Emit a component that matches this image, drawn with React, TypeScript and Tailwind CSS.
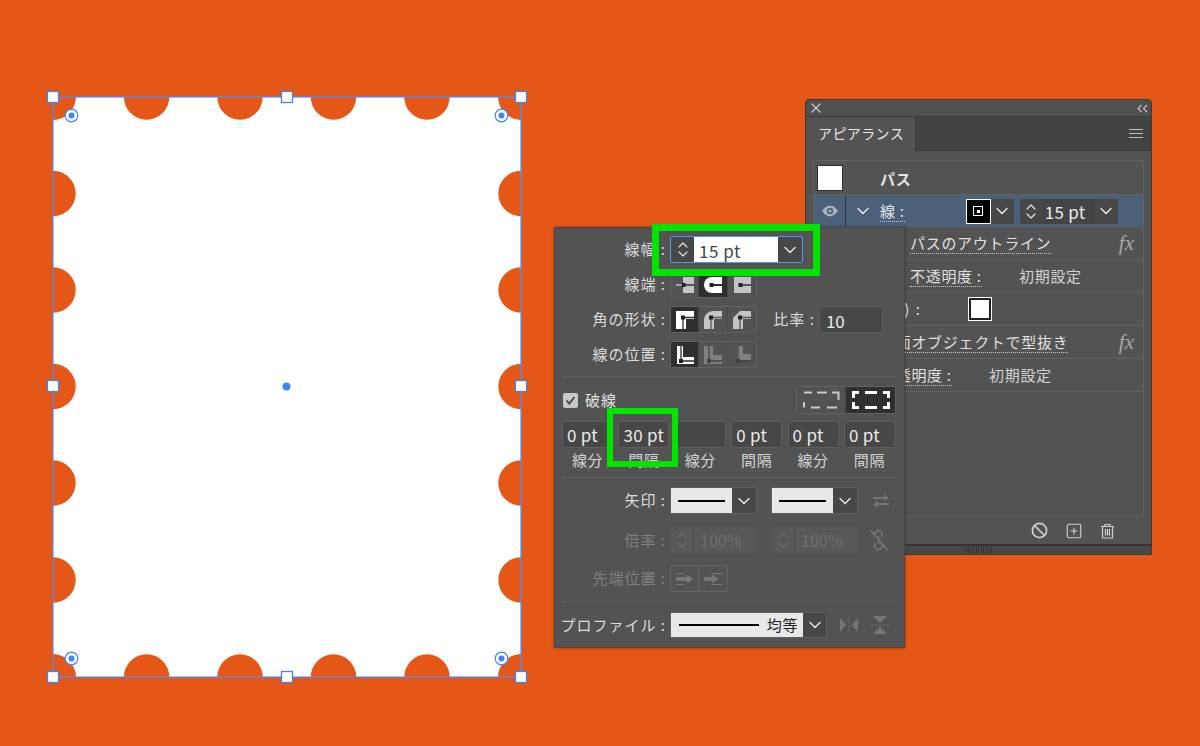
import { Ban, ChevronDown, ChevronUp, SquarePlus, X } from "lucide-react";

const jp = { fontFamily: '"Noto Sans CJK JP", sans-serif' };

const Chev = ({ up = false, dim = false }: { up?: boolean; dim?: boolean }) =>
  up ? (
    <ChevronUp size={20} strokeWidth={1.7} className={dim ? "text-[#6f6f6f]" : "text-[#e6e6e6]"} />
  ) : (
    <ChevronDown size={20} strokeWidth={1.7} className={dim ? "text-[#6f6f6f]" : "text-[#e6e6e6]"} />
  );

const Stepper = ({ dim = false, w = "w-[23px]" }: { dim?: boolean; w?: string }) => (
  <div className={`${w} h-full flex flex-col items-center justify-center -space-y-[7px]`}>
    <Chev up dim={dim} />
    <Chev dim={dim} />
  </div>
);

const Label = ({ children, w = "w-[111px]", dim = false }: { children: string; w?: string; dim?: boolean }) => (
  <div className={`${w} shrink-0 text-right text-[15px] tracking-[1px] whitespace-nowrap ${dim ? "text-[#808080]" : "text-[#dcdcdc]"}`}>
    {children}
  </div>
);

const Seg = ({ active = false, disabled = false, last = false, children }: { active?: boolean; disabled?: boolean; last?: boolean; children: React.ReactNode }) => (
  <div className={`w-[28.3px] h-full flex items-center justify-center ${active ? "bg-[#2f2f2f]" : ""} ${last ? "" : "border-r border-[#484848]"} ${disabled ? "opacity-40" : ""}`}>
    {children}
  </div>
);

const CapIcon = ({ kind, fill }: { kind: number; fill: string }) => (
  <svg width="22" height="22" viewBox="0 0 22 22">
    {kind === 0 && <path d="M9 3H20V19H9Z" fill={fill} />}
    {kind === 1 && <path d="M10 3H20V19H10A8 8 0 0 1 10 3Z" fill={fill} />}
    {kind === 2 && <path d="M3 3H20V19H3Z" fill={fill} />}
    <path d="M9 10H20V12H9Z" fill={kind === 1 ? "#2f2f2f" : "#555"} />
    <rect x="7.5" y="9" width="4" height="4" fill="#222" />
    {kind === 0 && <path d="M2 11H8" stroke="#c4c4c4" strokeWidth="1.4" />}
  </svg>
);

const JoinIcon = ({ kind, fill }: { kind: number; fill: string }) => {
  const d = [
    "M2 2H20V10H12V20H2Z",
    "M2 20V11A9 9 0 0 1 11 2H20V10H12V20Z",
    "M2 20V9L9 2H20V10H12V20Z",
  ][kind];
  return (
    <svg width="22" height="22" viewBox="0 0 22 22">
      <path d={d} fill={fill} />
      <path d="M9 20V8.500H20" stroke={kind === 0 ? "#2f2f2f" : "#555"} strokeWidth="1.300" fill="none" />
      <rect x="7" y="6.500" width="4" height="4" fill="#222" />
    </svg>
  );
};

const AlignIcon = ({ kind, fill }: { kind: number; fill: string }) => (
  <svg width="22" height="22" viewBox="0 0 22 22">
    {kind === 0 && <path d="M3 2H9V13H20V20H3Z" fill={fill} />}
    {kind === 1 && <path d="M2 2H11V11H20V20H2Z" fill={fill} />}
    {kind === 2 && <path d="M6 2H12V10H20V16H6Z" fill={fill} />}
    <path d="M7 2V17H20" stroke="#2f2f2f" strokeWidth="1.300" fill="none" />
    <rect x="5" y="15" width="4" height="4" fill="#222" />
  </svg>
);

const DashIcon = ({ strong }: { strong?: boolean }) => (
  <svg width="38" height="18" viewBox="0 0 38 18">
    {strong ? (
      <path d="M1.500 7V1.500H7M1.500 11V16.500H7M36.500 7V1.500H31M36.500 11V16.500H31M13 1.500H25M13 16.500H25" stroke="#fff" strokeWidth="3" fill="none" />
    ) : (
      <path d="M2 1.500H10M15 1.500H25M30 1.500H36.500V9M2 11V16.500M9 16.500H18M25 16.500H35" stroke="#c8c8c8" strokeWidth="2" fill="none" />
    )}
  </svg>
);

const DashField = ({ value, label }: { value: string; label: string }) => (
  <div className="w-[51px] flex flex-col items-center">
    <div className="w-full h-[27px] bg-[#474747] border border-[#5e5e5e] rounded-[2px] flex items-center pl-[4px] text-[17px] text-[#ececec] tracking-[0.3px] whitespace-nowrap">
      {value}
    </div>
    <div className="mt-[1px] text-[15px] leading-[22px] tracking-[0.6px] text-[#d4d4d4]">{label}</div>
  </div>
);

const Divider = ({ className }: { className: string }) => <div className={`h-[1px] mx-[7px] bg-[#606060] ${className}`} />;

const ArrowSelect = ({ className = "" }: { className?: string }) => (
  <div className={`w-[87px] h-full flex border border-[#5f5f5f] rounded-[2px] ${className}`}>
    <div className="w-[61px] bg-[#e8e8e8] flex items-center justify-center">
      <div className="w-[47px] h-[2px] bg-black" />
    </div>
    <div className="flex-1 bg-[#474747] flex items-center justify-center">
      <Chev />
    </div>
  </div>
);

const ScaleField = ({ className = "" }: { className?: string }) => (
  <div className={`w-[87px] h-full flex bg-[#585858] rounded-[2px] ${className}`}>
    <div className="border-r border-[#4d4d4d]">
      <Stepper dim />
    </div>
    <div className="pl-[6px] text-[16px] leading-[27px] text-[#6f6f6f]">100%</div>
  </div>
);

const LinkRow = ({ label, text, value, valueClass = "left-[175px]", className = "" }: { label?: string; text?: string; value?: string; valueClass?: string; className?: string }) => (
  <div className={`relative h-[33px] border-b border-[#626262] flex items-center pt-[1px] text-[15px] tracking-[0.7px] text-[#e0e0e0] ${className}`}>
    {label && <span className="border-b border-dotted border-[#c8c8c8] leading-[20px] whitespace-nowrap">{label}</span>}
    {value && <span className={`absolute text-[#d2d2d2] ${valueClass}`}>{value}</span>}
    {text && (
      <span className="absolute right-[9px] text-[#a8a8a8] text-[21px] italic tracking-normal" style={{ fontFamily: '"Liberation Serif", serif' }}>
        {text}
      </span>
    )}
  </div>
);

const Artwork = () => {
  const xs = [53, 146.6, 240, 333.5, 427, 521];
  const ys = [97, 193.5, 290, 386.5, 483, 580, 677];
  return (
    <svg className="absolute left-0 top-0" width="600" height="746">
      <rect x="53" y="97" width="468" height="580" fill="#fff" />
      <g fill="#e55717">
        {xs.map((x) => (
          <g key={x}>
            <circle cx={x} cy={97} r="22.7" />
            <circle cx={x} cy={677} r="22.7" />
          </g>
        ))}
        {ys.map((y) => (
          <g key={y}>
            <circle cx={53} cy={y} r="22.7" />
            <circle cx={521} cy={y} r="22.7" />
          </g>
        ))}
      </g>
      <rect x="53" y="97" width="468" height="580" fill="none" stroke="#4d8dff" strokeWidth="1.2" />
      {[
        [53, 97],
        [287, 97],
        [521, 97],
        [53, 386],
        [521, 386],
        [53, 677],
        [287, 677],
        [521, 677],
      ].map(([x, y]) => (
        <rect key={`${x}-${y}`} x={x - 5.5} y={y - 5.5} width="11" height="11" fill="#fff" stroke="#3f86f5" strokeWidth="1.3" />
      ))}
      {[
        [71.5, 115.5],
        [501.5, 115.5],
        [71.5, 658.5],
        [501.5, 658.5],
      ].map(([x, y]) => (
        <g key={`${x}-${y}`}>
          <circle cx={x} cy={y} r="6.3" fill="#fff" stroke="#3f86f5" strokeWidth="1.2" />
          <circle cx={x} cy={y} r="3" fill="#3f86f5" />
        </g>
      ))}
      <circle cx="286.5" cy="386.5" r="4" fill="#3f86f5" />
    </svg>
  );
};

const AppearancePanel = () => (
  <div className="absolute left-[805px] top-[99px] w-[347px] h-[456px] bg-[#535353] border border-[#3a3a3a] rounded-t-[4px] flex flex-col overflow-hidden" style={jp}>
    <div className="h-[17px] bg-[#505050] flex items-center justify-between pl-[2px] pr-[3px] border-b border-[#3c3c3c]">
      <X size={16} strokeWidth={1.8} className="text-[#c8c8c8]" />
      <svg width="11" height="9" viewBox="0 0 11 9" fill="none" stroke="#c8c8c8" strokeWidth="1.1">
        <path d="M4.500 1L1 4.500L4.500 8M10 1L6.500 4.500L10 8" />
      </svg>
    </div>
    <div className="h-[34px] bg-[#434343] flex items-stretch justify-between border-b border-[#3a3a3a]">
      <div className="w-[110px] bg-[#535353] border-r border-[#3a3a3a] -mb-[1px] pl-[12px] text-[14px] leading-[33px] tracking-[0.4px] text-[#e8e8e8]">
        アピアランス
      </div>
      <div className="w-[14px] mr-[8px] flex flex-col justify-center gap-[2.5px]">
        <div className="h-[1.5px] bg-[#bdbdbd]" />
        <div className="h-[1.5px] bg-[#bdbdbd]" />
        <div className="h-[1.5px] bg-[#bdbdbd]" />
      </div>
    </div>
    <div className="mx-[7px] mt-[9px] h-[357px] border border-[#626262] rounded-[2px] flex flex-col">
      <div className="h-[34px] flex items-center border-b border-[#626262] pl-[3px]">
        <div className="w-[26px] h-[26px] bg-white border border-[#2e2e2e]" />
        <div className="ml-[37px] pt-[3px] text-[15px] font-bold tracking-[0.7px] text-[#e4e4e4]">パス</div>
      </div>
      <div className="h-[32px] bg-[#4b6079] flex items-center">
        <div className="w-[32px] h-full flex items-center justify-center border-r border-[#2f3a47] shrink-0">
          <svg width="18" height="12" viewBox="0 0 18 12">
            <path d="M1 6C4 2 6.500 .8 9 .8S14 2 17 6C14 10 11.500 11.200 9 11.200S4 10 1 6Z" fill="#a9b4c0" />
            <circle cx="9" cy="6" r="3.2" fill="#4b6079" />
            <circle cx="9" cy="6" r="1.500" fill="#a9b4c0" />
          </svg>
        </div>
        <div className="w-[34px] flex justify-center">
          <Chev />
        </div>
        <div className="text-[15px] mt-[1px] tracking-[0.7px] text-[#e8e8e8] border-b border-dotted border-[#c8c8c8] leading-[20px] whitespace-nowrap">線 :</div>
        <div className="ml-[61px] w-[48px] h-[25px] flex bg-[#474747] rounded-[2px]">
          <div className="w-[25px] h-[25px] bg-black border border-white flex items-center justify-center">
            <div className="w-[10px] h-[10px] border-[1.5px] border-white bg-black flex items-center justify-center">
              <div className="w-[3px] h-[3px] bg-white" />
            </div>
          </div>
          <div className="flex-1 flex items-center justify-center">
            <Chev />
          </div>
        </div>
        <div className="ml-[6px] w-[98px] h-[25px] flex bg-[#474747] rounded-[2px]">
          <Stepper />
          <div className="w-[51px] bg-[#444] pl-[2px] text-[17px] leading-[26px] tracking-[0.3px] text-[#ececec] whitespace-nowrap">15 pt</div>
          <div className="flex-1 flex items-center justify-center">
            <Chev />
          </div>
        </div>
      </div>
      <LinkRow label="パスのアウトライン" text="fx" className="pl-[96px]" />
      <LinkRow label="不透明度 :" value="初期設定" valueClass="left-[205px]" className="pl-[96px]" />
      <div className="relative h-[33px] border-b border-[#626262] flex items-center text-[15px] text-[#e0e0e0] pl-[38px]">
        <span className="tracking-[1.5px] whitespace-nowrap">塗り(O) :</span>
        <div className="absolute left-[154px] top-[4px] w-[24px] h-[24px] border-[1.5px] border-white bg-[#222] p-[2px]">
          <div className="w-full h-full bg-white" />
        </div>
      </div>
      <LinkRow label="前面オブジェクトで型抜き" text="fx" className="pl-[66px]" />
      <LinkRow label="不透明度 :" value="初期設定" className="pl-[66px]" />
    </div>
    <div className="flex-1 flex items-center justify-end gap-[17px] pr-[36px] text-[#d0d0d0]">
      <Ban size={17} strokeWidth={2.4} />
      <SquarePlus size={18} strokeWidth={1.5} />
      <svg width="15" height="16" viewBox="0 0 15 16" fill="none" stroke="#d0d0d0" strokeWidth="1.200">
        <path d="M1 3.500H14M5 3.500V1.500H10V3.500M2.500 3.500V15H12.500V3.500M5.500 6V12.500M7.500 6V12.500M9.500 6V12.500" />
      </svg>
    </div>
    <div className="h-[10px] bg-[#484848] border-t-[2px] border-[#333] flex justify-center items-center">
      <div className="w-[26px] h-[6px] bg-[repeating-linear-gradient(90deg,#333_0,#333_1px,transparent_1px,transparent_2.500px)]" />
    </div>
  </div>
);

const StrokePanel = () => (
  <div className="absolute left-[554px] top-[227px] w-[351px] h-[421px] bg-[#535353] border border-[#474747] shadow-[0_0_3px_rgba(0,0,0,0.35)]" style={jp}>
    <div className="mt-[8px] h-[27px] flex items-center">
      <Label>線幅 :</Label>
      <div className="ml-[4px] w-[133px] h-full flex border border-[#4a9bf0] rounded-[2px] bg-[#474747]">
        <Stepper />
        <div className="w-[84px] bg-white pl-[5px] text-[17px] leading-[27px] tracking-[0.5px] text-[#444]">15 pt</div>
        <div className="flex-1 flex items-center justify-center">
          <Chev />
        </div>
      </div>
    </div>
    <div className="mt-[8px] h-[27px] flex items-center">
      <Label>線端 :</Label>
      <div className="ml-[4px] h-full flex border border-[#616161] rounded-[2px]">
        <Seg><CapIcon kind={0} fill="#c4c4c4" /></Seg>
        <Seg active><CapIcon kind={1} fill="#fff" /></Seg>
        <Seg last><CapIcon kind={2} fill="#c4c4c4" /></Seg>
      </div>
    </div>
    <div className="mt-[8px] h-[27px] flex items-center">
      <Label>角の形状 :</Label>
      <div className="ml-[4px] h-full flex border border-[#616161] rounded-[2px]">
        <Seg active><JoinIcon kind={0} fill="#fff" /></Seg>
        <Seg><JoinIcon kind={1} fill="#c4c4c4" /></Seg>
        <Seg last><JoinIcon kind={2} fill="#c4c4c4" /></Seg>
      </div>
      <Label w="w-[58px]">比率 :</Label>
      <div className="ml-[4px] w-[64px] h-[27px] bg-[#474747] border border-[#5e5e5e] rounded-[2px] pl-[6px] text-[17px] leading-[27px] text-[#ececec]">10</div>
    </div>
    <div className="mt-[8px] h-[27px] flex items-center">
      <Label>線の位置 :</Label>
      <div className="ml-[4px] h-full flex border border-[#616161] rounded-[2px]">
        <Seg active><AlignIcon kind={0} fill="#fff" /></Seg>
        <Seg disabled><AlignIcon kind={1} fill="#c4c4c4" /></Seg>
        <Seg disabled last><AlignIcon kind={2} fill="#c4c4c4" /></Seg>
      </div>
    </div>
    <Divider className="mt-[8px]" />
    <div className="mt-[9px] h-[28px] flex items-center pl-[8px] pr-[8px]">
      <div className="w-[15px] h-[15px] bg-[#c8c8c8] rounded-[2px] flex items-center justify-center">
        <svg width="11" height="11" viewBox="0 0 11 11">
          <path d="M1.500 5.500L4.300 8.500L9.500 2" stroke="#444" strokeWidth="1.800" fill="none" />
        </svg>
      </div>
      <div className="ml-[7px] text-[15px] tracking-[1px] text-[#e4e4e4]">破線</div>
      <div className="ml-auto h-full flex border border-[#616161] rounded-[2px]">
        <div className="w-[49px] flex items-center justify-center border-r border-[#484848]"><DashIcon /></div>
        <div className="w-[49px] bg-[#2f2f2f] flex items-center justify-center"><DashIcon strong /></div>
      </div>
    </div>
    <div className="mt-[7px] pl-[7px] pr-[9px] flex justify-between">
      <DashField value="0 pt" label="線分" />
      <DashField value="30 pt" label="間隔" />
      <DashField value="" label="線分" />
      <DashField value="0 pt" label="間隔" />
      <DashField value="0 pt" label="線分" />
      <DashField value="0 pt" label="間隔" />
    </div>
    <Divider className="mt-[6px]" />
    <div className="mt-[9px] h-[27px] flex items-center">
      <Label>矢印 :</Label>
      <ArrowSelect className="ml-[4px]" />
      <ArrowSelect className="ml-[14px]" />
      <svg className="ml-[14px]" width="18" height="16" viewBox="0 0 18 16" fill="#757575">
        <path d="M1 4H12V1L17 5.300L12 8V6H1Z M17 10H6V7.500L1 11.200L6 15V12H17Z" />
      </svg>
    </div>
    <div className="mt-[13px] h-[26px] flex items-center">
      <Label dim>倍率 :</Label>
      <ScaleField className="ml-[4px]" />
      <ScaleField className="ml-[14px]" />
      <svg className="ml-[11px]" width="20" height="24" viewBox="0 0 20 24" fill="none" stroke="#757575" strokeWidth="1.600">
        <path d="M6 9V6A3.500 3.500 0 0 1 13 6V9M6 15V18A3.500 3.500 0 0 0 13 18V15M9.500 8V16M1.500 2L18.500 22" />
      </svg>
    </div>
    <div className="mt-[12px] h-[27px] flex items-center">
      <Label dim>先端位置 :</Label>
      <div className="ml-[4px] h-full flex border border-[#656565] rounded-[2px]">
        {[0, 1].map((i) => (
          <div key={i} className={`w-[28px] flex items-center justify-center ${i === 0 ? "border-r border-[#656565]" : ""}`}>
            <svg width="20" height="16" viewBox="0 0 20 16" fill="#777">
              <path d={i === 0 ? "M1 2H9V3H1Z M1 6H12V3.500L18 8L12 12.500V10H1Z M1 13H9V14H1Z" : "M8 2H19V3H8Z M1 6H9V3.500L16 8L9 12.500V10H1Z M8 13H19V14H8Z"} />
            </svg>
          </div>
        ))}
      </div>
    </div>
    <Divider className="mt-[9px]" />
    <div className="mt-[10px] h-[26px] flex items-center">
      <Label>プロファイル :</Label>
      <div className="ml-[4px] w-[157px] h-full flex border border-[#5f5f5f] rounded-[2px]">
        <div className="w-[132px] bg-[#e8e8e8] flex items-center pl-[8px] pr-[5px] justify-between">
          <div className="w-[80px] h-[2px] bg-black" />
          <span className="text-[15px] text-[#222] tracking-[0.6px]">均等</span>
        </div>
        <div className="flex-1 bg-[#474747] flex items-center justify-center">
          <Chev />
        </div>
      </div>
      <svg className="ml-[12px]" width="20" height="18" viewBox="0 0 20 18" fill="#757575">
        <path d="M1 2L7 9L1 16Z M19 2V16L13 9Z" />
        <path d="M10 1V17" stroke="#757575" strokeDasharray="2 2" />
      </svg>
      <svg className="ml-[11px]" width="20" height="20" viewBox="0 0 20 20" fill="#757575">
        <path d="M3 1H17L10 8Z M3 19H17L10 12Z" />
        <path d="M1 10H19" stroke="#757575" strokeDasharray="2 2" />
      </svg>
    </div>
  </div>
);

export default function App() {
  return (
    <div className="relative w-[1200px] h-[746px] overflow-hidden bg-[#e55717]">
      <Artwork />
      <AppearancePanel />
      <StrokePanel />
      {/* green callouts */}
      <div className="absolute left-[652px] top-[224px] w-[168px] h-[52px] border-[7px] border-[#00e400]" />
      <div className="absolute left-[607px] top-[408px] w-[71px] h-[59px] border-[6px] border-[#00e400]" />
    </div>
  );
}
